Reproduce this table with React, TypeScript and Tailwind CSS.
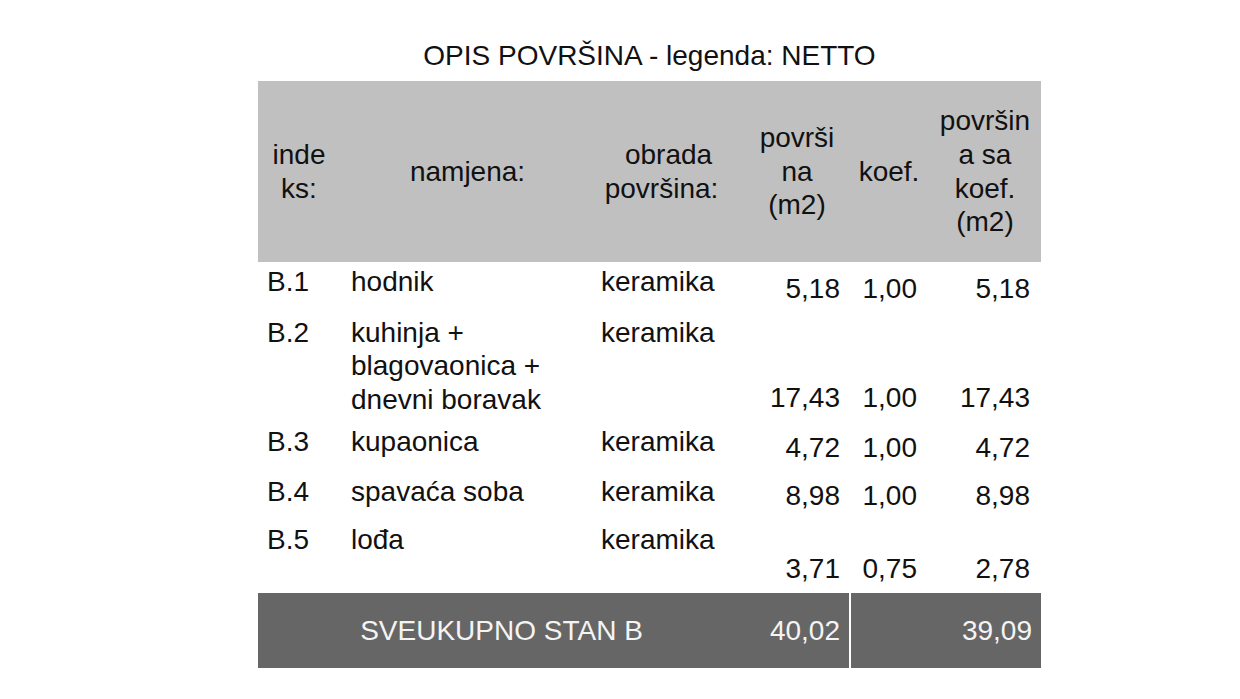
const cols = 'grid grid-cols-[82px_255px_150px_104px_80px_112px]';

interface Row {
  idx: string;
  namjena: string[];
  obrada: string;
  povrsina: string;
  koef: string;
  saKoef: string;
  h: string;
}

const rows: Row[] = [
  { idx: 'B.1', namjena: ['hodnik'], obrada: 'keramika', povrsina: '5,18', koef: '1,00', saKoef: '5,18', h: 'h-[51px]' },
  {
    idx: 'B.2',
    namjena: ['kuhinja +', 'blagovaonica +', 'dnevni boravak'],
    obrada: 'keramika',
    povrsina: '17,43',
    koef: '1,00',
    saKoef: '17,43',
    h: 'h-[109px]',
  },
  { idx: 'B.3', namjena: ['kupaonica'], obrada: 'keramika', povrsina: '4,72', koef: '1,00', saKoef: '4,72', h: 'h-[50px]' },
  { idx: 'B.4', namjena: ['spavaća soba'], obrada: 'keramika', povrsina: '8,98', koef: '1,00', saKoef: '8,98', h: 'h-[48px]' },
  { idx: 'B.5', namjena: ['lođa'], obrada: 'keramika', povrsina: '3,71', koef: '0,75', saKoef: '2,78', h: 'h-[73px]' },
];

export default function App() {
  return (
    <div className="min-h-[699px] w-full bg-white font-['Liberation_Sans',Arial,sans-serif] text-[28px] leading-[33.6px] text-[#111]">
      <div className="ml-[258px] w-[783px] pt-[39px]">
        <h1 className="mb-[8px] text-center text-[28px] font-normal leading-[34px]">
          OPIS POVRŠINA - legenda: NETTO
        </h1>

        {/* zaglavlje */}
        <div className={`${cols} h-[181px] bg-[#c0c0c0]`}>
          <div className="flex items-center justify-center text-center">
            inde
            <br />
            ks:
          </div>
          <div className="flex items-center justify-center">namjena:</div>
          <div className="flex flex-col items-center justify-center">
            <span className="pr-[3px]">obrada</span>
            <span className="pr-[17px]">površina:</span>
          </div>
          <div className="flex items-center justify-center text-center">
            <div>
              površi
              <br />
              na
              <br />
              (m2)
            </div>
          </div>
          <div className="flex items-center justify-center">koef.</div>
          <div className="flex items-center justify-center text-center">
            <div>
              površin
              <br />
              a sa
              <br />
              koef.
              <br />
              (m2)
            </div>
          </div>
        </div>

        {/* stavke */}
        {rows.map((r) => (
          <div key={r.idx} className={`${cols} ${r.h}`}>
            <div className="self-start pl-[9px] pt-[2.5px]">{r.idx}</div>
            <div className="self-start pl-[11px] pt-[2.5px]">
              {r.namjena.map((l) => (
                <div key={l}>{l}</div>
              ))}
            </div>
            <div className="self-start pl-[6px] pt-[2.5px]">{r.obrada}</div>
            <div className="self-end pb-[7px] pr-[9px] text-right">{r.povrsina}</div>
            <div className="self-end pb-[7px] pr-[12px] text-right">{r.koef}</div>
            <div className="self-end pb-[7px] pr-[11px] text-right">{r.saKoef}</div>
          </div>
        ))}

        {/* ukupno */}
        <div className={`${cols} h-[75px] bg-[#666666] text-[#f4f4f4]`}>
          <div className="col-span-3 flex items-center justify-center">SVEUKUPNO STAN B</div>
          <div className="flex items-center justify-end pr-[9px]">40,02</div>
          <div className="col-span-2 flex items-center justify-end border-l-2 border-white pr-[9px]">
            39,09
          </div>
        </div>
      </div>
    </div>
  );
}
